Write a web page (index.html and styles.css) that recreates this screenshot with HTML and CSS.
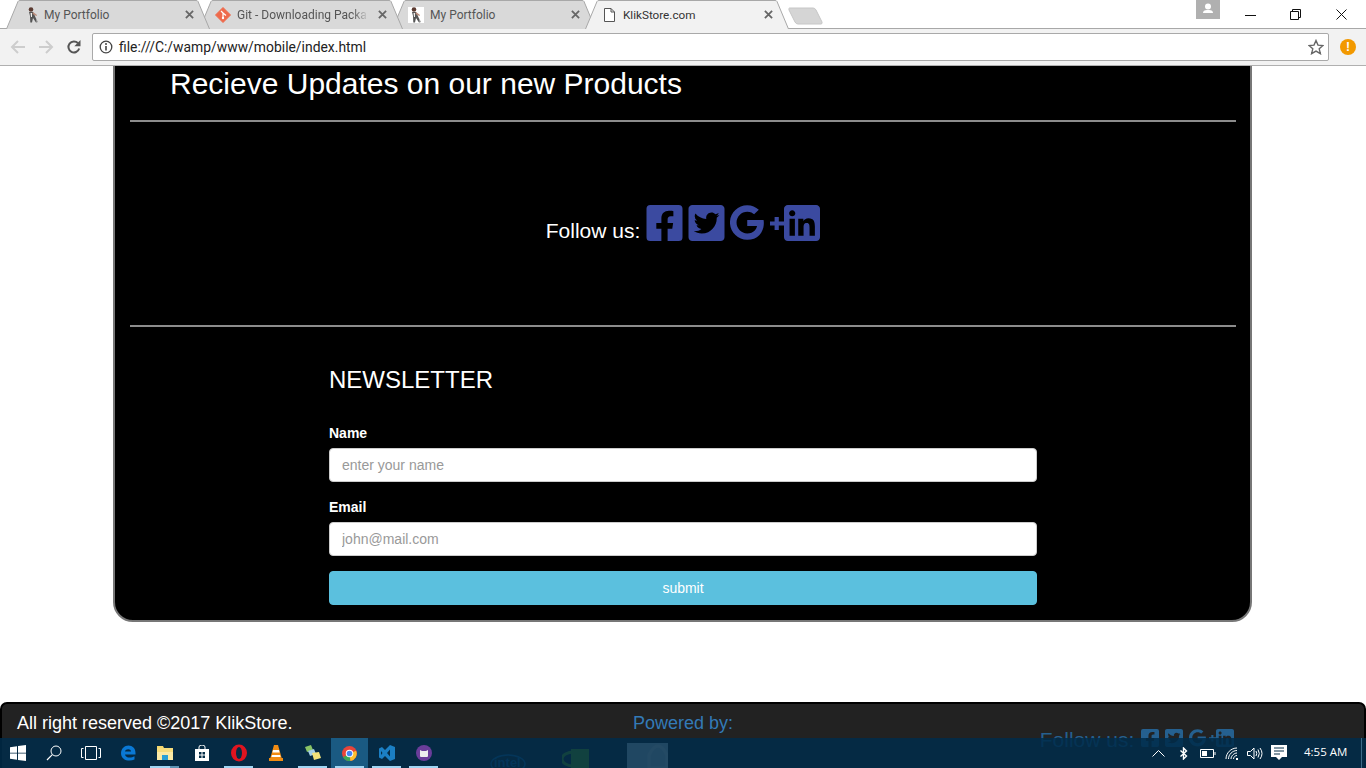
FILE: index.html
```html
<!DOCTYPE html>
<html lang="en">
<head>
<meta charset="utf-8">
<title>KlikStore.com</title>
<link rel="stylesheet" href="styles.css">
</head>
<body>
<svg class="defs" width="0" height="0" aria-hidden="true">
  <symbol id="person" viewBox="0 0 13 16">
    <circle cx="4.500" cy="2.500" r="2.300" fill="#5b3a30"/>
    <path d="M2.500 5 L6.500 5 L8 8 L11 15 L9.500 15.500 L6.500 11 L5.500 15.500 L3.800 15.500 L3.500 9 Z" fill="#555"/>
    <path d="M6.500 5 L10.500 8 L10 9 L6 7 Z" fill="#b98a78"/>
    <path d="M4 6 L5.500 6 L5.500 10 L4.500 10 Z" fill="#eee"/>
    <path d="M9.500 11 L11.500 15 L10 15.500 Z" fill="#aaa"/>
  </symbol>
  <symbol id="fb" viewBox="0 32 448 448"><path d="M400 32H48A48 48 0 0 0 0 80v352a48 48 0 0 0 48 48h137.25V327.69h-63V256h63v-54.64c0-62.15 37-96.48 93.67-96.48 27.14 0 55.52 4.84 55.52 4.84v61h-31.27c-30.81 0-40.42 19.12-40.42 38.73V256h68.78l-11 71.69h-57.78V480H400a48 48 0 0 0 48-48V80a48 48 0 0 0-48-48z"/></symbol>
  <symbol id="tw" viewBox="0 32 448 448"><path d="M400 32H48C21.5 32 0 53.5 0 80v352c0 26.5 21.5 48 48 48h352c26.5 0 48-21.5 48-48V80c0-26.5-21.5-48-48-48zm-48.9 158.8c.2 2.8.2 5.7.2 8.5 0 86.7-66 186.6-186.6 186.6-37.2 0-71.7-10.8-100.7-29.4 5.3.6 10.4.8 15.8.8 30.7 0 58.9-10.4 81.4-28-28.8-.6-53-19.5-61.3-45.5 10.1 1.5 19.2 1.5 29.6-1.2-30-6.1-52.5-32.5-52.5-64.4v-.8c8.7 4.9 18.9 7.9 29.6 8.3a65.447 65.447 0 0 1-29.2-54.6c0-12.2 3.2-23.4 8.9-33.1 32.3 39.8 80.8 65.8 135.2 68.6-9.3-44.5 24-80.6 64-80.6 18.9 0 35.9 7.9 47.9 20.7 14.8-2.8 29-8.3 41.6-15.8-4.9 15.2-15.1 28-28.6 36.1 13.1-1.4 25.8-5.1 37.6-10.2-8.9 13.1-20.1 24.7-32.9 34z"/></symbol>
  <symbol id="gp" viewBox="0 0 54 36"><path transform="translate(-1.200 -5.500) scale(.09)" d="M386.061 228.496c1.834 9.692 3.143 19.384 3.143 31.956C389.204 370.205 315.599 448 204.800 448c-106.084 0-192-85.915-192-192s85.916-192 192-192c51.864 0 95.083 18.859 128.611 50.292l-52.126 50.030c-14.145-13.621-39.028-29.599-76.485-29.599-65.484 0-118.920 54.221-118.920 121.277 0 67.056 53.436 121.277 118.920 121.277 75.961 0 104.513-54.745 108.965-82.773H204.800v-66.009h181.261z"/><path d="M44.600 12h4.200v4.400H54v4.200h-5.200V25h-4.200v-4.400H40v-4.200h4.600z"/></symbol>
  <symbol id="in" viewBox="0 32 448 448"><path d="M400 32H48C21.500 32 0 53.500 0 80v352c0 26.500 21.500 48 48 48h352c26.500 0 48-21.500 48-48V80c0-26.500-21.500-48-48-48zM135.400 416H69V202.200h66.500V416zm-33.200-243c-21.300 0-38.500-17.300-38.500-38.500S80.900 96 102.200 96c21.200 0 38.500 17.300 38.500 38.500 0 21.300-17.200 38.500-38.500 38.500zm282.100 243h-66.400V312c0-24.800-.5-56.700-34.500-56.700-34.600 0-39.900 27-39.900 54.900V416h-66.400V202.200h63.700v29.200h.9c8.900-16.800 30.600-34.500 62.900-34.500 67.200 0 79.700 44.300 79.700 101.900V416z"/></symbol>
  <symbol id="close" viewBox="0 0 10 10"><path d="M1 1l8 8M9 1l-8 8" fill="none" stroke="#666" stroke-width="2"/></symbol>
  <symbol id="tabshape" viewBox="0 0 204 29" preserveAspectRatio="none"><path d="M0.500 29 L12 1.500 Q12.500 .5 14 .5 L190 .5 Q191.500 .5 192 1.500 L203.500 29"/></symbol>
</svg>

<header class="chrome">
  <div class="tabstrip">
    <div class="tabs">
      <div class="tab t1">
        <svg class="tab-bg"><use href="#tabshape"/></svg>
        <svg class="fav fav-person"><use href="#person"/></svg>
        <span class="tab-title">My Portfolio</span>
        <svg class="tab-x"><use href="#close"/></svg>
      </div>
      <div class="tab t2">
        <svg class="tab-bg"><use href="#tabshape"/></svg>
        <svg class="fav fav-git" viewBox="0 0 16 16"><path d="M8 .5 L15.500 8 L8 15.500 L.5 8 Z" fill="#ee6a4c" stroke="#ee6a4c" stroke-linejoin="round"/><path d="M6 4 L9 7 M8 6 V11 M8 6 L11 8.500" stroke="#fff" stroke-width="1.200" fill="none"/><circle cx="8" cy="11" r="1.200" fill="#fff"/></svg>
        <span class="tab-title fade">Git - Downloading Packa</span>
        <svg class="tab-x"><use href="#close"/></svg>
      </div>
      <div class="tab t3">
        <svg class="tab-bg"><use href="#tabshape"/></svg>
        <svg class="fav fav-white"><use href="#person"/></svg>
        <span class="tab-title">My Portfolio</span>
        <svg class="tab-x"><use href="#close"/></svg>
      </div>
      <div class="tab t4 active">
        <svg class="tab-bg"><use href="#tabshape"/></svg>
        <svg class="fav fav-doc" viewBox="0 0 11 14"><path d="M.5.5h6.500l3.500 3.500v9.500h-10z M7 .5v3.500h3.500" fill="#fff" stroke="#555"/></svg>
        <span class="tab-title">KlikStore.com</span>
        <svg class="tab-x"><use href="#close"/></svg>
      </div>
      <svg class="newtab" viewBox="0 0 35 18"><path d="M1.500 1 H25 Q27 1 28 3 L34 15 Q34.500 17 33 17 H10 Q8 17 7 15 L1 3 Q.5 1 1.500 1Z" fill="#d5d5d5" stroke="#c6c6c6"/></svg>
    </div>
    <div class="winctl">
      <div class="avatar"><svg viewBox="0 0 24 19" width="24" height="19"><circle cx="12" cy="6.500" r="3" fill="#fff"/><path d="M7 13 Q7 10 11 10 H13 Q17 10 17 13 Z" fill="#fff"/></svg></div>
      <div class="winbtn"><svg width="11" height="11" viewBox="0 0 11 11"><path d="M0 6.500h11" stroke="#111"/></svg></div>
      <div class="winbtn"><svg width="11" height="11" viewBox="0 0 11 11"><path d="M.5 2.500h8v8h-8zM2.500 2.500v-2h8v8h-2" fill="none" stroke="#111"/></svg></div>
      <div class="winbtn"><svg width="11" height="11" viewBox="0 0 11 11"><path d="M.5.5l10 10M10.500.5l-10 10" stroke="#111"/></svg></div>
    </div>
  </div>
  <div class="toolbar">
    <svg class="navi" viewBox="0 0 16 16"><path d="M15 8H2M8 2L2 8l6 6" fill="none" stroke="#cdcdcd" stroke-width="2"/></svg>
    <svg class="navi" viewBox="0 0 16 16"><path d="M1 8h13M8 2l6 6-6 6" fill="none" stroke="#cdcdcd" stroke-width="2"/></svg>
    <svg class="navi" viewBox="0 0 16 16"><path d="M13.200 9.500A5.500 5.500 0 1 1 12 4.200" fill="none" stroke="#555" stroke-width="2"/><path d="M14.500 1v6.200H8.300z" fill="#555"/></svg>
    <div class="omnibox">
      <svg class="info" viewBox="0 0 14 14"><circle cx="7" cy="7" r="5.800" fill="none" stroke="#444" stroke-width="1.300"/><path d="M7 6v4.400" stroke="#444" stroke-width="1.600"/><circle cx="7" cy="4" r="1" fill="#444"/></svg>
      <span class="url">file:///C:/wamp/www/mobile/index.html</span>
      <svg class="star" viewBox="0 0 16 16"><path d="M8 1.500l2 4.600 5 .4-3.800 3.300 1.200 4.900L8 12.100l-4.400 2.600 1.200-4.900L1 6.500l5-.4z" fill="none" stroke="#666" stroke-width="1.400"/></svg>
    </div>
    <div class="alert">!</div>
  </div>
</header>

<div class="page">
  <main class="card">
    <h2 class="updates">Recieve Updates on our new Products</h2>
    <hr class="rule">
    <section class="follow">
      <span class="follow-label">Follow us:</span>
      <svg class="ic"><use href="#fb"/></svg>
      <svg class="ic"><use href="#tw"/></svg>
      <svg class="ic-g"><use href="#gp"/></svg>
      <svg class="ic ic-in"><use href="#in"/></svg>
    </section>
    <hr class="rule">
    <form class="news">
      <h3 class="news-title">NEWSLETTER</h3>
      <label class="lbl" for="n">Name</label>
      <input class="field" id="n" type="text" placeholder="enter your name">
      <label class="lbl" for="e">Email</label>
      <input class="field" id="e" type="text" placeholder="john@mail.com">
      <button class="submit" type="button">submit</button>
    </form>
  </main>
  <footer class="foot">
    <div class="foot-a">All right reserved ©2017 KlikStore.</div>
    <div class="foot-b">
      <div class="pow">Powered by:</div>
      <div class="logos">
        <svg class="lg-intel" viewBox="0 0 36 24"><ellipse cx="18" cy="12" rx="17" ry="9" fill="none" stroke="#1d6fb0" stroke-width="1.500"/><text x="4" y="14.500" class="lg-text">intel</text></svg>
        <svg class="lg-nv" viewBox="0 0 27 24"><rect x="9" width="18" height="24" fill="#76b900"/><ellipse cx="12" cy="10" rx="12" ry="7" fill="none" stroke="#76b900" stroke-width="3"/></svg>
        <svg class="lg-arc" viewBox="0 0 41 25"><rect width="41" height="25" fill="#d8e4ec"/><path d="M22 25 V12 Q31-6 40 12 V25 Z" fill="none" stroke="#f2f6f9" stroke-width="3"/></svg>
      </div>
    </div>
    <div class="foot-c">
      <span class="foot-follow">Follow us:</span>
      <svg class="ic-s"><use href="#fb"/></svg>
      <svg class="ic-s"><use href="#tw"/></svg>
      <svg class="ic-sg"><use href="#gp"/></svg>
      <svg class="ic-s ic-sin"><use href="#in"/></svg>
    </div>
  </footer>
</div>

<div class="taskbar">
  <div class="tb-items">
    <div class="tb narrow"><svg width="16" height="16" viewBox="0 0 16 16"><path d="M0 2.300l7-1v6.400H0zM8 1.100L16 0v7.700H8zM0 8.500h7v6.300l-7-1zM8 8.500h8V16l-8-1.100z" fill="#fff"/></svg></div>
    <div class="tb narrow"><svg width="16" height="16" viewBox="0 0 16 16"><circle cx="10" cy="6" r="5" fill="none" stroke="#fff"/><path d="M6.300 9.700L1 15" stroke="#fff" stroke-width="1.200"/></svg></div>
    <div class="tb"><svg width="20" height="14" viewBox="0 0 20 14"><path d="M4.500.5h11v13h-11z" fill="none" stroke="#fff"/><path d="M2.500 2.500H.5v9h2M17.500 2.500h2v9h-2" fill="none" stroke="#fff"/></svg></div>
    <div class="tb"><svg width="16" height="16" viewBox="0 0 16 16"><path d="M1 8.500C1 3.500 4.500.5 8.500.5c4 0 7 2.800 7 7.500v1.500H5c.3 3.500 6 4 9.500 1.700v3.300c-5 2.400-13.500 1.200-13.500-6.500zM5 6.500h6c0-3-5.500-3-6 0z" fill="#0a78d4"/></svg></div>
    <div class="tb on half"><svg width="16" height="15" viewBox="0 0 16 15"><path d="M0 0h6l1 2h-7z" fill="#f5d76e"/><path d="M0 2h16v12H0z" fill="#f7dc7c"/><path d="M0 6h16v8H0z" fill="#fbe9a5"/><path d="M5 14V9h6v5z" fill="#2a9fd6"/></svg></div>
    <div class="tb"><svg width="14" height="16" viewBox="0 0 14 16"><path d="M0 4h14v12H0z" fill="#fff"/><path d="M4 4V2q0-2 3-2t3 2v2" fill="none" stroke="#fff"/><path d="M4 7h2.500v2.500H4zM7.500 7H10v2.500H7.500zM4 10.500h2.500V13H4zM7.500 10.500H10V13H7.500z" fill="#042c46"/></svg></div>
    <div class="tb on"><svg width="16" height="18" viewBox="0 0 16 18"><ellipse cx="8" cy="9" rx="8" ry="8.500" fill="#e0141f"/><ellipse cx="8" cy="9" rx="3" ry="6" fill="#042c46"/></svg></div>
    <div class="tb"><svg width="14" height="16" viewBox="0 0 14 16"><path d="M5 0h4l4 14H1z" fill="#f28c13"/><path d="M4 5h6l.6 2.500H3.400zM3 10h8l.6 2H2.400z" fill="#fff"/><path d="M0 13h14v3H0z" fill="#f28c13"/></svg></div>
    <div class="tb on"><svg width="16" height="16" viewBox="0 0 16 16"><path d="M0 2l6-2 2 5-6 2z" fill="#8ac466"/><path d="M3 6l6-2 2 5-6 2z" fill="#a3cfe8"/><path d="M7 8l7-1 2 6-7 2z" fill="#f3e27a"/></svg></div>
    <div class="tb active on"><svg width="15" height="15" viewBox="0 0 16 16"><circle cx="8" cy="8" r="8" fill="#e8443a"/><path d="M8 8L1 12a8 8 0 0 0 8 4z" fill="#3aa757"/><path d="M8 8l7-3a8 8 0 0 1-6 11z" fill="#fbc02d"/><circle cx="8" cy="8" r="4" fill="#fff"/><circle cx="8" cy="8" r="3" fill="#4285f4"/></svg></div>
    <div class="tb on"><svg width="16" height="16" viewBox="0 0 16 16"><path d="M11 0l5 2v12l-5 2-5-5-3 3-3-1.500v-9L3 2l3 3zM11 4.500L8 8l3 3.500zM2 6v4l1.500-2z" fill="#1b7fc4"/></svg></div>
    <div class="tb on"><svg width="16" height="16" viewBox="0 0 16 16"><circle cx="8" cy="8" r="8" fill="#6a3d9a"/><path d="M4 5l2 1h4l2-1v6q0 1-1 1H5q-1 0-1-1z" fill="#eee"/></svg></div>
  </div>
  <div class="tray">
    <svg class="tr tr-chev" width="13" height="7" viewBox="0 0 13 7"><path d="M.5 6.500l6-6 6 6" fill="none" stroke="#fff"/></svg>
    <svg class="tr tr-bt" width="8" height="13" viewBox="0 0 8 13"><path d="M.5 3.500l6 5.500-3 3V1l3 3-6 5.500" fill="none" stroke="#fff" stroke-width="1.400"/></svg>
    <svg class="tr tr-bat" width="16" height="9" viewBox="0 0 16 9"><path d="M.5.5h13v8H.5z" fill="none" stroke="#fff"/><path d="M2 2h5v5H2z" fill="#fff"/><path d="M14.500 3h1v3h-1z" fill="#fff"/></svg>
    <svg class="tr tr-wifi" width="13" height="13" viewBox="0 0 13 13"><path d="M1 12C1 6 6 1 12 1M3.500 12c0-4.500 4-8.500 8.500-8.500M6 12c0-3 3-6 6-6M8.500 12c0-1.800 1.600-3.500 3.500-3.500" fill="none" stroke="#fff"/><path d="M11 11h2v2h-2z" fill="#fff"/></svg>
    <svg class="tr tr-vol" width="16" height="13" viewBox="0 0 16 13"><path d="M.5 4.500h3L7 1v11L3.500 8.500h-3z" fill="none" stroke="#fff"/><path d="M9 4q1.500 2.500 0 5M11 2.500q2.600 4 0 8M13 1q4 5.500 0 11" fill="none" stroke="#fff"/></svg>
    <svg class="tr tr-note" width="16" height="16" viewBox="0 0 16 16"><path d="M0 0h16v12h-5l-3 3-3-3H0z" fill="#fff"/><path d="M3 3h10M3 6h10M3 9h6" stroke="#042c46"/></svg>
    <span class="clock">4:55 AM</span>
    <span class="show-desk"></span>
  </div>
</div>
</body>
</html>
```

FILE: styles.css
```css
* { box-sizing: border-box; }
html, body { margin: 0; padding: 0; }
body {
  width: 1366px;
  height: 768px;
  overflow: hidden;
  position: relative;
  display: flex;
  flex-direction: column;
  background: #fff;
  font-family: "Liberation Sans", Arial, sans-serif;
}
.defs { position: absolute; }

/* browser chrome */
.chrome { flex: none; height: 66px; }
.tabstrip {
  height: 29px;
  display: flex;
  justify-content: space-between;
  background: linear-gradient(to bottom, #fff 28px, #a8a8a8 28px);
}
.tabs { display: flex; padding-left: 6px; }
.tab {
  position: relative;
  width: 204px;
  height: 29px;
  margin-right: -11px;
  display: flex;
  align-items: center;
  padding: 0 16px 0 20px;
  font-family: Roboto, "Open Sans", sans-serif;
  font-size: 12px;
  color: #555;
}
.t1 { z-index: 4; }
.t2 { z-index: 3; padding-left: 16px; }
.t3 { z-index: 2; padding-left: 16px; }
.t4 { z-index: 5; padding-left: 19px; color: #333; font-size: 11.7px; }
.tab-bg {
  position: absolute;
  left: 0;
  top: 0;
  width: 204px;
  height: 29px;
  fill: #d9d9d9;
  stroke: #a8a8a8;
}
.active .tab-bg { fill: #f2f2f2; }
.fav, .tab-title, .tab-x { position: relative; }
.fav { flex: none; }
.fav-person { width: 14px; height: 16px; margin-right: 4px; }
.fav-white { width: 16px; height: 16px; margin-right: 6px; background: #fff; }
.fav-git { width: 16px; height: 16px; margin-right: 6px; }
.fav-doc { width: 11px; height: 14px; margin-right: 8px; }
.tab-title {
  flex: 1;
  white-space: nowrap;
}
.fade {
  -webkit-mask-image: linear-gradient(to right, #000 115px, transparent 132px);
  mask-image: linear-gradient(to right, #000 115px, transparent 132px);
}
.tab-x { flex: none; width: 9px; height: 9px; margin-left: 7px; }
.newtab { width: 35px; height: 18px; margin: 7px 0 0 10px; }
.winctl { display: flex; align-items: flex-start; margin-right: 2px; }
.avatar { width: 24px; height: 19px; background: #b0b0b0; margin-right: 7.5px; }
.winbtn {
  width: 45.5px;
  height: 28px;
  display: flex;
  align-items: center;
  justify-content: center;
}
.toolbar {
  height: 37px;
  background: #f2f2f2;
  border-bottom: 1px solid #b0b0b0;
  display: flex;
  align-items: center;
  padding: 0 7px 0 10px;
}
.navi { width: 16px; height: 16px; margin-right: 12px; flex: none; }
.omnibox {
  width: 1237px;
  height: 28px;
  margin-left: -2px;
  background: #fff;
  border: 1px solid #a9a9a9;
  border-radius: 2px;
  display: flex;
  align-items: center;
  padding: 0 4px 0 6px;
}
.info { width: 14px; height: 14px; flex: none; margin-right: 6px; }
.url { flex: 1; font-family: Roboto, "Open Sans", sans-serif; font-size: 13.9px; color: #222; }
.star { width: 16px; height: 16px; flex: none; }
.alert {
  width: 16px;
  height: 16px;
  margin-left: 11px;
  border-radius: 50%;
  background: #f29900;
  color: #fff;
  font-size: 12px;
  font-weight: bold;
  line-height: 16px;
  text-align: center;
}

/* page */
.page { flex: 1; overflow: hidden; min-height: 0; }
.card {
  width: 1139px;
  margin: -20px 0 0 113px;
  height: 576px;
  background: #000;
  border: 2px solid #777;
  border-radius: 20px;
  padding: 0 14px 0 15px;
  color: #fff;
}
.updates {
  margin: 0;
  padding: 18px 0 0 40px;
  height: 72px;
  font-size: 30px;
  font-weight: normal;
  line-height: 36px;
}
.rule { margin: 0; border: 0; border-top: 2px solid #8c8c8c; }
.follow {
  height: 203px;
  display: flex;
  align-items: center;
  justify-content: center;
  padding-bottom: 2px;
}
.follow-label { font-size: 21px; margin: 16px 6px 0 0; }
.ic { width: 37px; height: 36px; fill: #3b4aa0; margin-right: 5px; }
.ic-g { width: 54px; height: 36px; fill: #3b4aa0; margin-right: 0; }
.ic-in { width: 36px; margin-right: 0; }

.news { width: 708px; margin: 0 auto; }
.news-title {
  margin: 0;
  padding-top: 38px;
  font-size: 24px;
  font-weight: normal;
  line-height: 30px;
  height: 81px;
}
.lbl {
  display: block;
  font-size: 14px;
  font-weight: bold;
  line-height: 20px;
  height: 25px;
  margin-top: 15px;
}
.field {
  display: block;
  width: 100%;
  height: 34px;
  border: 1px solid #ccc;
  border-radius: 4px;
  background: #fff;
  padding: 6px 12px;
  font-family: "Liberation Sans", Arial, sans-serif;
  font-size: 14px;
  color: #555;
}
.field::placeholder { color: #999; opacity: 1; }
.submit {
  display: block;
  width: 100%;
  height: 34px;
  margin-top: 15px;
  border: 1px solid #5bc0de;
  border-radius: 4px;
  background: #5bc0de;
  color: #fff;
  font-family: "Liberation Sans", Arial, sans-serif;
  font-size: 14px;
}

.foot {
  margin-top: 80px;
  height: 80px;
  background: #222;
  border: 2px solid #000;
  border-radius: 7px;
  display: grid;
  grid-template-columns: repeat(3, 1fr);
  color: #fff;
}
.foot-a { padding: 9px 0 0 15px; font-size: 18px; line-height: 20px; }
.foot-b { text-align: center; padding-top: 9px; }
.pow { font-size: 18px; line-height: 20px; color: #337ab7; }
.logos { display: flex; align-items: flex-start; margin: 10px 0 0 34px; }
.lg-intel { width: 36px; height: 24px; margin-top: 9px; }
.lg-text { font-family: "Liberation Sans", Arial, sans-serif; font-size: 13px; font-weight: bold; fill: #1d6fb0; }
.lg-nv { width: 27px; height: 24px; margin: 6px 0 0 36px; }
.lg-arc { width: 41px; height: 25px; margin-left: 38px; }
.foot-c {
  display: flex;
  align-items: flex-start;
  justify-content: center;
  padding-top: 24px;
  color: #25608f;
}
.foot-follow { font-size: 21px; line-height: 24px; margin-right: 7px; }
.ic-s { width: 18px; height: 18px; fill: #25608f; margin: 1px 6px 0 0; }
.ic-sg { width: 27px; height: 18px; fill: #25608f; margin-top: 1px; }
.ic-sin { margin-right: 0; }

/* taskbar */
.taskbar {
  position: absolute;
  left: 0;
  right: 0;
  bottom: 0;
  height: 30px;
  background: rgba(0, 44, 74, .85);
  display: flex;
  justify-content: space-between;
}
.tb-items { display: flex; }
.tb {
  width: 37px;
  height: 30px;
  display: flex;
  align-items: center;
  justify-content: center;
  position: relative;
}
.tb.narrow { width: 36px; }
.tb.on::after {
  content: "";
  position: absolute;
  left: 4px;
  right: 4px;
  bottom: 0;
  height: 2px;
  background: #9fd5f3;
}
.tb.half::after { background: linear-gradient(to right, #9fd5f3 68%, #5e94b4 68%); }
.tb.active { background: #1a5a82; }
.tray { display: flex; align-items: center; }
.tr { flex: none; }
.tr-chev { margin-right: 15px; }
.tr-bt { margin-right: 12px; }
.tr-bat { margin-right: 9px; }
.tr-wifi { margin-right: 9px; }
.tr-vol { margin-right: 8px; }
.tr-note { margin-right: 17px; }
.clock { font-family: "Open Sans", "Noto Sans", sans-serif; font-size: 11.5px; color: #fff; width: 57px; margin-bottom: 3px; }
.show-desk { width: 1px; height: 30px; background: #3c6b88; margin-right: 4px; }
```
